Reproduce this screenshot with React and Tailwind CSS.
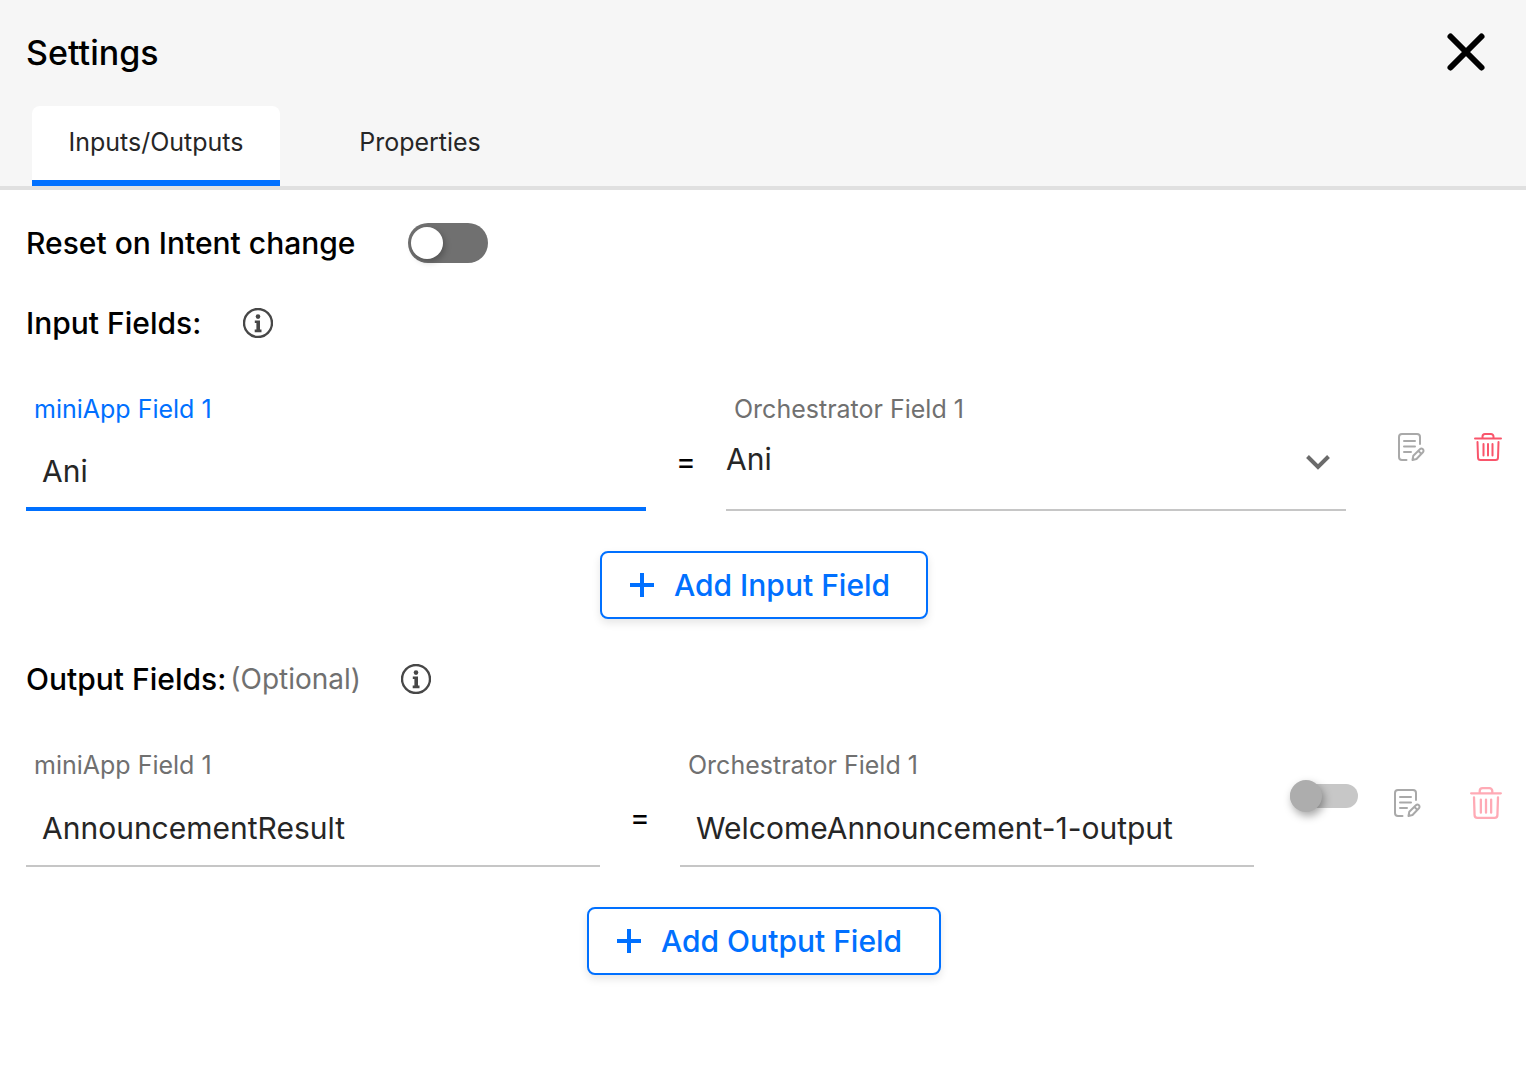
import { useState } from 'react'

const TABS = ['Inputs/Outputs', 'Properties']

function InfoIcon() {
  return (
    <svg viewBox="0 0 30 30" className="h-[30px] w-[30px]" fill="none" aria-hidden="true">
      <circle cx="15" cy="15" r="14" stroke="#474747" strokeWidth="2.4" />
      <circle cx="15" cy="8.6" r="2.3" fill="#474747" />
      <path d="M11.8 12.4h5.2v9.2h1.5v2.6h-6.8v-2.6h1.7v-6.6h-1.6z" fill="#474747" />
    </svg>
  )
}

function NoteIcon() {
  return (
    <svg
      viewBox="0 0 28 28"
      className="h-7 w-7"
      fill="none"
      stroke="#a9a9a9"
      strokeWidth="2"
      strokeLinecap="round"
      strokeLinejoin="round"
      aria-hidden="true"
    >
      <path d="M22 11V4a3 3 0 0 0-3-3H4a3 3 0 0 0-3 3v20a3 3 0 0 0 3 3h4.5" />
      <path d="M6 8h11M6 13.5h11M6 19h7" />
      <path d="M14.5 27l.8-4.3 6.600-6.4a2.1 2.1 0 0 1 3 3l-6.4 6.7zM20.5 18l2.6 2.6" />
    </svg>
  )
}

function TrashIcon({ className }) {
  return (
    <svg
      viewBox="0 0 28 28"
      className={className}
      fill="none"
      stroke="currentColor"
      strokeWidth="2"
      strokeLinecap="round"
      strokeLinejoin="round"
      aria-hidden="true"
    >
      <path d="M1 5.5h26M8.5 5V3.5a2.5 2.5 0 0 1 2.5-2.5h6a2.5 2.5 0 0 1 2.5 2.5V5" />
      <path d="M3.5 9l.5 15.5a2.5 2.5 0 0 0 2.5 2.5h15a2.5 2.5 0 0 0 2.5-2.5L24.5 9" />
      <path d="M9.5 11v11.5M14 11v11.5M18.5 11v11.5" />
    </svg>
  )
}

function AddButton({ children, className }) {
  return (
    <button
      type="button"
      className={`mx-auto mt-10 flex h-[68px] items-center gap-5 rounded-lg border-2 border-[#0070ff] bg-white pl-7 text-[30px] font-medium text-[#0070ff] shadow-[0_4px_8px_rgba(0,0,0,0.1)] ${className}`}
    >
      <svg viewBox="0 0 24 24" className="h-6 w-6" stroke="currentColor" strokeWidth="4" aria-hidden="true">
        <path d="M12 0v24M0 12h24" />
      </svg>
      {children}
    </button>
  )
}

function TextField({ id, label, value, active }) {
  return (
    <div className="min-w-0 flex-1">
      <label
        htmlFor={id}
        className={`block h-10 pl-2 text-[25px] leading-10 ${active ? 'text-[#0070ff]' : 'text-[#707070]'}`}
      >
        {label}
      </label>
      <input
        id={id}
        type="text"
        defaultValue={value}
        className={`block h-[82px] w-full px-4 pt-1.5 text-[30px] text-[#262626] outline-none ${
          active ? 'border-b-4 border-[#0070ff]' : 'border-b-2 border-[#c6c6c6]'
        }`}
      />
    </div>
  )
}

function SelectField({ id, label, value }) {
  return (
    <div className="min-w-0 flex-1">
      <label htmlFor={id} className="block h-10 pl-2 text-[25px] leading-10 text-[#707070]">
        {label}
      </label>
      <div className="relative">
        <select
          id={id}
          className="block h-[82px] w-full appearance-none border-b-2 border-[#c6c6c6] pb-5 text-[30px] text-[#262626] outline-none"
        >
          <option>{value}</option>
        </select>
        <svg
          viewBox="0 0 24 16"
          className="pointer-events-none absolute top-[25px] right-4 h-4 w-6"
          fill="none"
          stroke="#6b6b6b"
          strokeWidth="4"
          aria-hidden="true"
        >
          <path d="M1.5 2.5L12 13 22.5 2.5" />
        </svg>
      </div>
    </div>
  )
}

function Equals() {
  return (
    <span className="w-20 shrink-0 pt-[52px] text-center text-[30px] leading-10 text-black">
      =
    </span>
  )
}

export default function App() {
  const [tab, setTab] = useState(TABS[0])

  return (
    <main className="min-h-screen bg-white font-['Inter',sans-serif] text-black">
      <header className="border-b-4 border-[#e0e0e0] bg-[#f6f6f6]">
        <div className="mb-0.5 flex h-[104px] items-center justify-between pr-10 pl-[26px]">
          <h1 className="text-[34px] font-medium">Settings</h1>
          <button type="button" aria-label="Close">
            <svg
              viewBox="0 0 40 40"
              className="h-10 w-10"
              stroke="currentColor"
              strokeWidth="6"
              strokeLinecap="round"
              aria-hidden="true"
            >
              <path d="M4.500 4.500l31 31M35.500 4.500l-31 31" />
            </svg>
          </button>
        </div>
        <nav className="flex gap-4 px-8" role="tablist">
          {TABS.map((name) => (
            <button
              key={name}
              type="button"
              role="tab"
              aria-selected={tab === name}
              onClick={() => setTab(name)}
              className={`h-20 w-[248px] rounded-t-lg border-b-[6px] text-[25px] text-[#262626] ${
                tab === name ? 'border-[#0070ff] bg-white' : 'border-transparent'
              }`}
            >
              {name}
            </button>
          ))}
        </nav>
      </header>

      <div className="pt-[33px] pr-6 pb-10 pl-[26px]">
        <div className="flex h-10 items-center">
          <label htmlFor="reset" className="w-[382px] text-[30px] font-medium">
            Reset on Intent change
          </label>
          <input
            id="reset"
            type="checkbox"
            className="h-10 w-20 appearance-none rounded-full bg-[#707070] p-1 pl-[3px] before:block before:h-8 before:w-8 before:rounded-full before:bg-white before:shadow-[2px_3px_6px_rgba(0,0,0,0.25)] before:transition-transform checked:bg-[#0070ff] checked:before:translate-x-10"
          />
        </div>

        <section className="mt-10">
          <div className="flex h-10 items-center">
            <h2 className="w-[217px] text-[30px] font-medium">Input Fields:</h2>
            <InfoIcon />
          </div>
          <div className="mt-[46px] flex items-start">
            <TextField id="in-mini" label="miniApp Field 1" value="Ani" active />
            <Equals />
            <SelectField id="in-orch" label="Orchestrator Field 1" value="Ani" />
            <div className="flex h-[116px] items-center pl-[52px]">
              <button type="button" aria-label="Edit input field">
                <NoteIcon />
              </button>
              <button type="button" aria-label="Delete input field" className="ml-12 text-[#f9556b]">
                <TrashIcon className="h-7 w-7" />
              </button>
            </div>
          </div>
          <AddButton className="w-[328px]">Add Input Field</AddButton>
        </section>

        <section className="mt-10">
          <div className="flex h-10 items-center">
            <div className="flex w-[375px] items-center gap-1">
              <h2 className="text-[30px] font-medium">Output Fields:</h2>
              <span className="text-[28px] text-[#707070]">(Optional)</span>
            </div>
            <InfoIcon />
          </div>
          <div className="mt-[46px] flex items-start">
            <TextField id="out-mini" label="miniApp Field 1" value="AnnouncementResult" />
            <Equals />
            <TextField id="out-orch" label="Orchestrator Field 1" value="WelcomeAnnouncement-1-output" />
            <div className="flex h-[116px] items-center pl-9">
              <input
                type="checkbox"
                aria-label="Enable output field"
                className="mb-3.5 flex h-6 w-[68px] appearance-none items-center rounded-full bg-[#c7c7c7] before:block before:h-8 before:w-8 before:rounded-full before:bg-[#adadad] before:shadow-[2px_4px_8px_rgba(0,0,0,0.35)] before:transition-transform checked:before:translate-x-9"
              />
              <button type="button" aria-label="Edit output field" className="ml-9">
                <NoteIcon />
              </button>
              <button type="button" aria-label="Delete output field" className="ml-12 text-[#ffaab5]">
                <TrashIcon className="h-8 w-8" />
              </button>
            </div>
          </div>
          <AddButton className="w-[354px]">Add Output Field</AddButton>
        </section>
      </div>
    </main>
  )
}
